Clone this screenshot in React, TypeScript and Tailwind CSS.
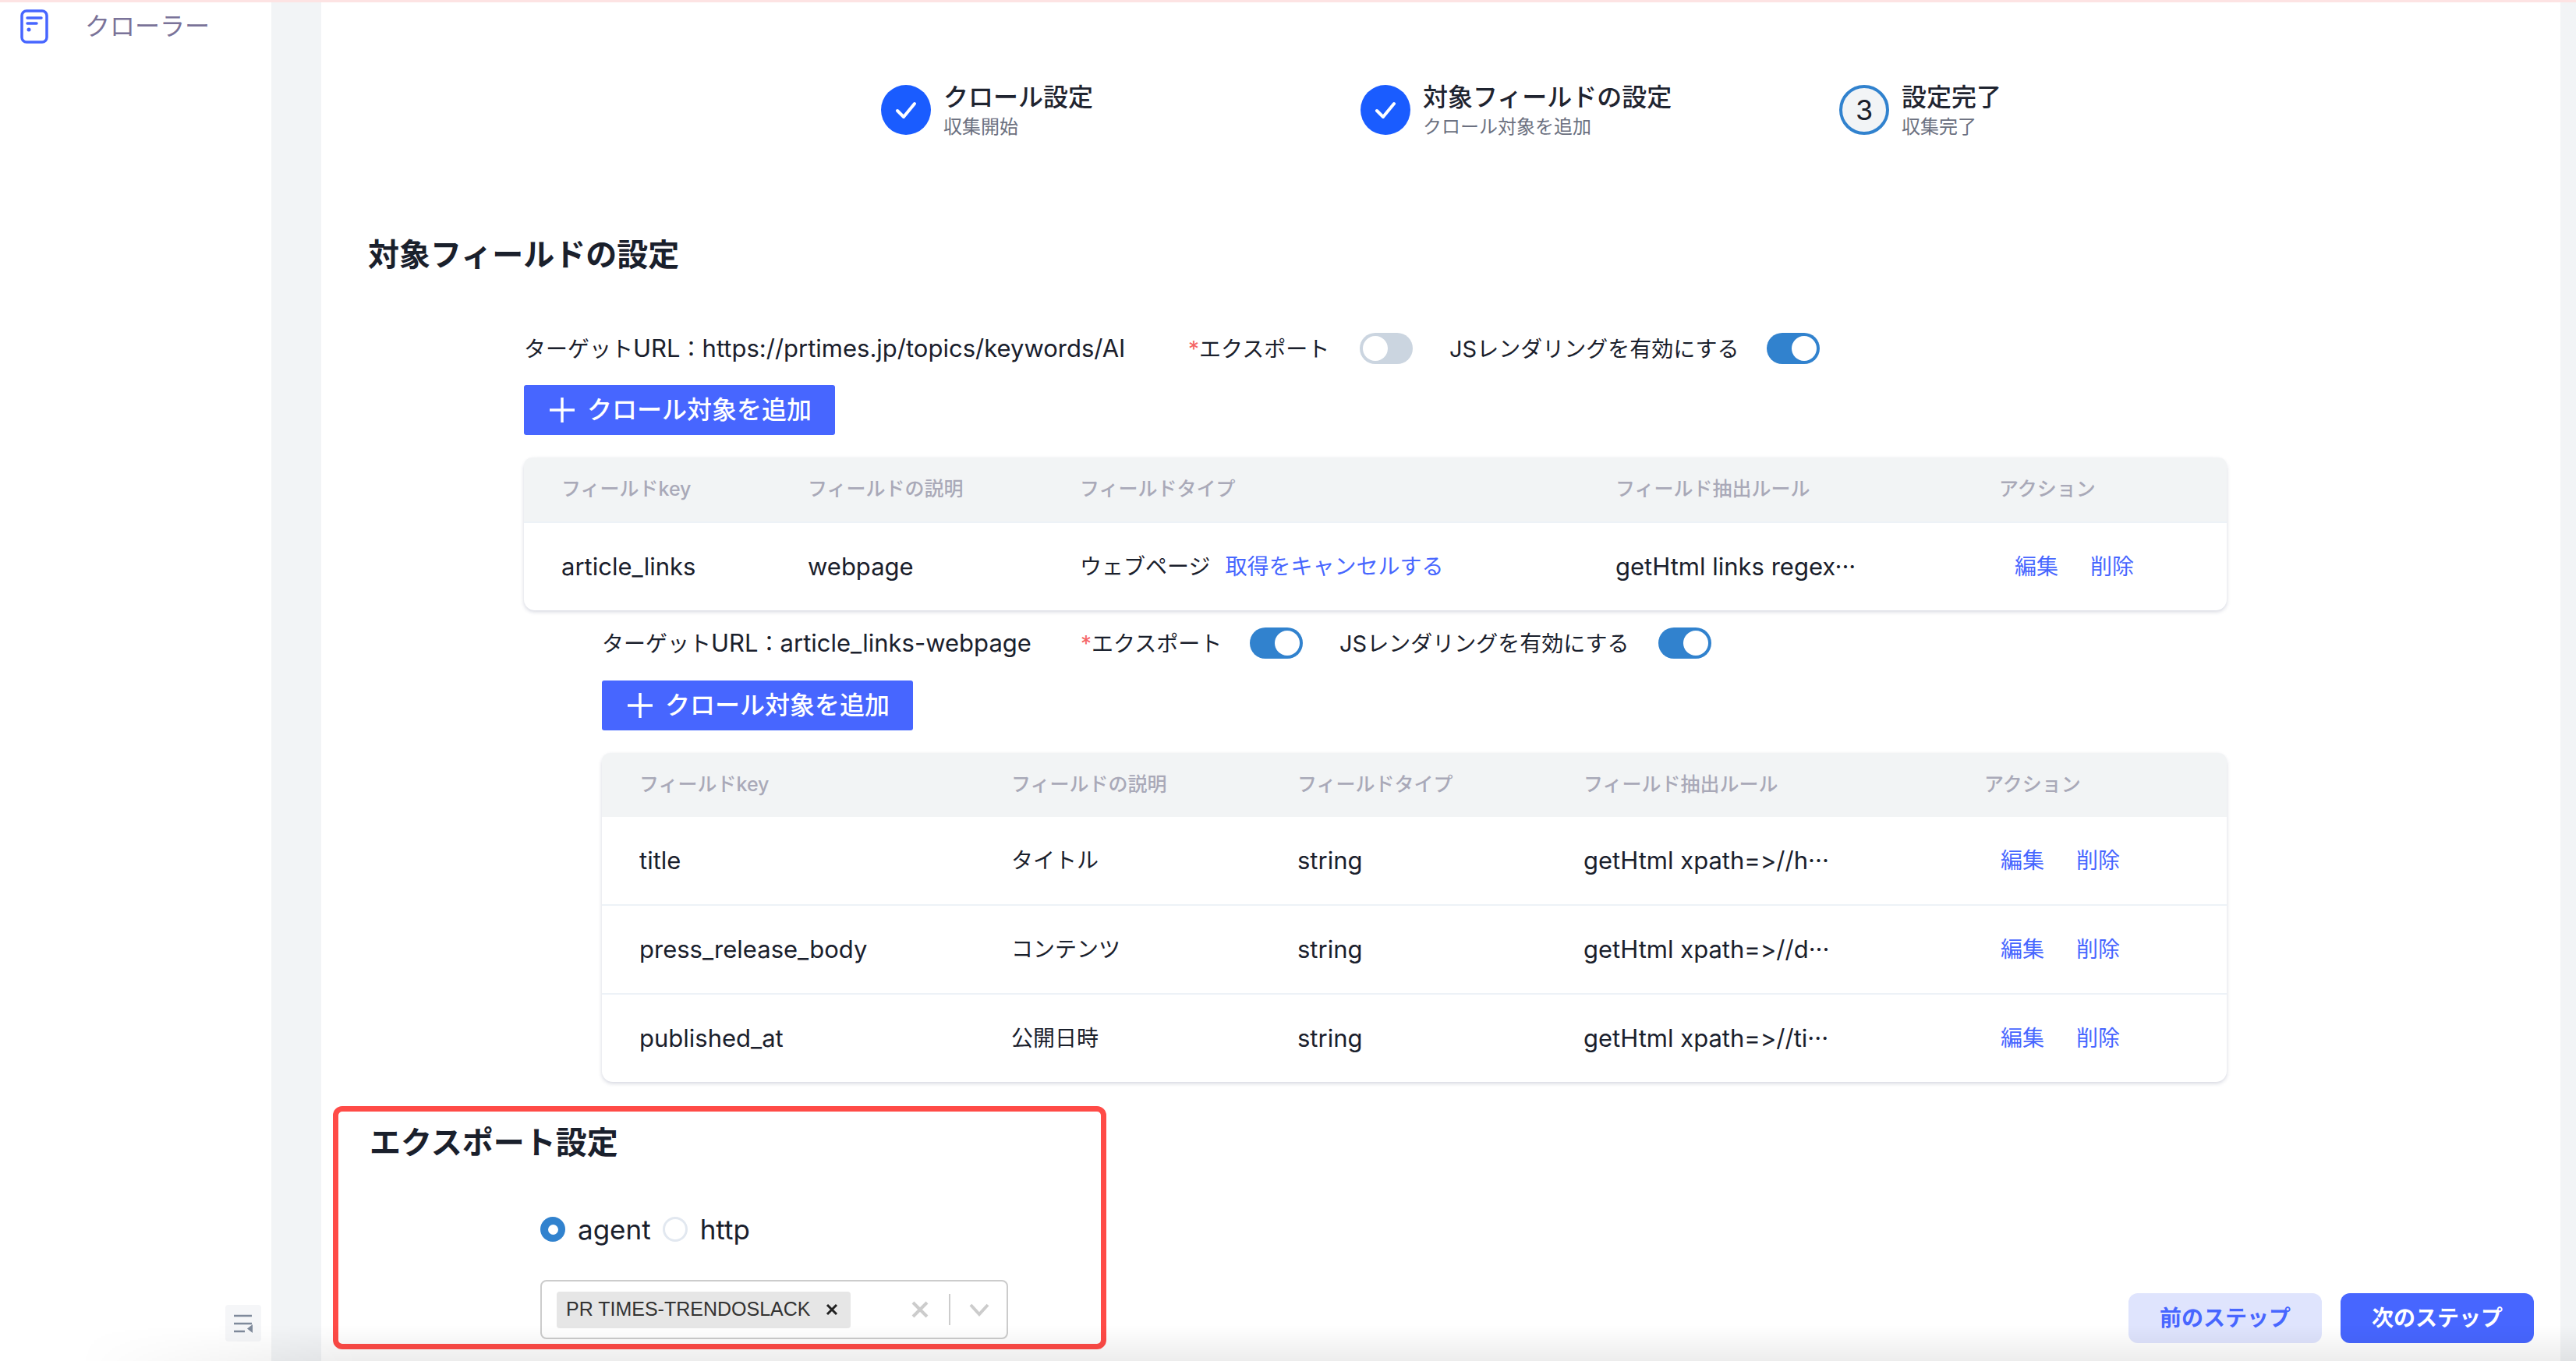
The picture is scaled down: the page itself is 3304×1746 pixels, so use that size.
import React from "react";

function Toggle({ on }: { on: boolean }) {
  return (
    <div className={`flex h-[40px] w-[68px] shrink-0 items-center rounded-full p-[4px] ${on ? "justify-end bg-[#3182ce]" : "justify-start bg-[#cbd5e0]"}`}>
      <div className="h-[32px] w-[32px] rounded-full bg-white" />
    </div>
  );
}

function AddButton() {
  return (
    <button className="flex h-[64px] w-[399px] items-center rounded-[3px] bg-[#4766ff] pl-[32px] text-[32px] font-medium text-white">
      <svg width="34" height="34" viewBox="0 0 34 34" className="mr-[15px] shrink-0">
        <path d="M17 1v32M1 17h32" stroke="#fff" strokeWidth="3.5" fill="none" />
      </svg>
      クロール対象を追加
    </button>
  );
}

function J({ children, className = "" }: { children: React.ReactNode; className?: string }) {
  return <span className={`text-[28px] ${className}`}>{children}</span>;
}

function ConfigRow({ url, urlW, expW, jsW, exportOn }: { url: string; urlW: string; expW: string; jsW: string; exportOn: boolean }) {
  return (
    <div className="flex h-[40px] items-center text-[31px] leading-[40px] text-[#1a202c]">
      <span className={`whitespace-nowrap ${urlW}`}>
        <J>ターゲット</J>URL<J>：</J>{url}
      </span>
      <span className={`whitespace-nowrap ${expW}`}>
        <J className="text-[#f56565]">*</J><J>エクスポート</J>
      </span>
      <Toggle on={exportOn} />
      <span className={`ml-[47px] whitespace-nowrap ${jsW}`}>
        <span className="text-[29px]">JS</span><J>レンダリングを有効にする</J>
      </span>
      <Toggle on />
    </div>
  );
}

function Actions({ className }: { className: string }) {
  return (
    <div className={`flex gap-[41px] text-[28px] text-[#4766ff] ${className}`}>
      <span>編集</span>
      <span>削除</span>
    </div>
  );
}

function Cell({ children, cjk }: { children: React.ReactNode; cjk?: boolean }) {
  return <div className={`truncate whitespace-nowrap pr-[8px] ${cjk ? "text-[28px]" : ""}`}>{children}</div>;
}

function TableHeader({ cols, labels }: { cols: string; labels: string[] }) {
  return (
    <div className={`grid h-[82px] items-center rounded-t-[10px] bg-[#f2f4f5] text-[25px] font-medium text-[#a9a9b8] ${cols}`}>
      {labels.map((l) => (
        <div key={l} className="whitespace-nowrap">{l}</div>
      ))}
    </div>
  );
}

const labels = ["フィールドkey", "フィールドの説明", "フィールドタイプ", "フィールド抽出ルール", "アクション"];
const bodyText = "text-[31px] text-[#1a202c] leading-[40px] [font-feature-settings:'calt'_0,'liga'_0]";

function FirstTable() {
  const cols = "grid-cols-[316px_349px_687px_492px_1fr] pl-[48px]";
  return (
    <div className="rounded-[14px] bg-white shadow-[0_2px_5px_rgba(60,70,110,0.22)]">
      <TableHeader cols={cols} labels={labels} />
      <div className={`grid h-[114px] items-center border-t-2 border-[#edf2f7] ${bodyText} ${cols}`}>
        <Cell>article_links</Cell>
        <Cell>webpage</Cell>
        <div className="whitespace-nowrap text-[28px]">
          ウェブページ<span className="ml-[19px] text-[#4766ff]">取得をキャンセルする</span>
        </div>
        <Cell>getHtml links regex···</Cell>
        <Actions className="pl-[20px]" />
      </div>
    </div>
  );
}

function SecondTable() {
  const cols = "grid-cols-[477px_367px_367px_514px_1fr] pl-[48px]";
  const rows: [string, string, string, string, string][] = [
    ["title", "タイトル", "string", "getHtml xpath=>//h···", "h-[112px]"],
    ["press_release_body", "コンテンツ", "string", "getHtml xpath=>//d···", "h-[114px] border-t-2 border-[#edf2f7]"],
    ["published_at", "公開日時", "string", "getHtml xpath=>//ti···", "h-[114px] border-t-2 border-[#edf2f7]"],
  ];
  return (
    <div className="rounded-[14px] bg-white shadow-[0_2px_5px_rgba(60,70,110,0.22)]">
      <TableHeader cols={cols} labels={labels} />
      {rows.map((r) => (
        <div key={r[0]} className={`grid items-center ${bodyText} ${r[4]} ${cols}`}>
          <Cell>{r[0]}</Cell>
          <Cell cjk>{r[1]}</Cell>
          <Cell>{r[2]}</Cell>
          <Cell>{r[3]}</Cell>
          <Actions className="pl-[21px]" />
        </div>
      ))}
    </div>
  );
}

function StepText({ title, sub }: { title: string; sub: string }) {
  return (
    <div className="flex flex-col">
      <div className="h-[42px] whitespace-nowrap text-[32px] font-medium leading-[42px] text-[#1f2430]">{title}</div>
      <div className="mt-[2px] whitespace-nowrap text-[24px] leading-[30px] text-[#6b7080]">{sub}</div>
    </div>
  );
}

function StepDone({ title, sub }: { title: string; sub: string }) {
  return (
    <div className="flex items-center gap-[16px]">
      <div className="flex h-[64px] w-[64px] items-center justify-center rounded-full bg-[#1a5cff]">
        <svg width="36" height="36" viewBox="0 0 36 36">
          <path d="M7 19l8 8 14-17" stroke="#fff" strokeWidth="4" fill="none" strokeLinecap="round" strokeLinejoin="round" />
        </svg>
      </div>
      <StepText title={title} sub={sub} />
    </div>
  );
}

export default function App() {
  return (
    <div className="relative flex h-[1746px] w-[3304px] flex-col overflow-hidden bg-white font-['Inter','Noto_Sans_CJK_JP',sans-serif]">
      <div className="h-[3px] shrink-0 bg-[#fde3e3]" />
      <div className="flex min-h-0 flex-1">
        {/* Sidebar */}
        <aside className="relative w-[348px] shrink-0 bg-white">
          <div className="flex items-center pl-[26px] pt-[9px]">
            <svg width="36" height="44" viewBox="0 0 36 44" className="shrink-0">
              <rect x="2" y="2" width="32" height="40" rx="6" fill="none" stroke="#4766ff" strokeWidth="3.5" />
              <path d="M9 11h18M9 18h12" stroke="#4766ff" strokeWidth="3.5" strokeLinecap="round" fill="none" />
              <circle cx="11" cy="26" r="2.5" fill="#4766ff" />
            </svg>
            <span className="ml-[47px] whitespace-nowrap text-[32px] leading-[40px] text-[#7a7399]">クローラー</span>
          </div>
          <div className="absolute left-[289px] top-[1671px] flex h-[47px] w-[46px] items-center justify-center rounded-[4px] bg-[#f5f6f8]">
            <svg width="28" height="26" viewBox="0 0 28 26">
              <path d="M2 3h23M2 13h23M2 23h14" stroke="#7f8a9b" strokeWidth="2.6" fill="none" />
              <path d="M26 17v11l-7-5.500z" fill="#7f8a9b" transform="translate(0 -3)" />
            </svg>
          </div>
        </aside>
        <div className="w-[64px] shrink-0 bg-[#f2f4f6]" />

        {/* Main */}
        <main className="relative min-w-0 flex-1 bg-white pl-[60px]">
          <div className="grid grid-cols-[615px_614px_1fr] pl-[658px] pt-[101px]">
            <StepDone title="クロール設定" sub="収集開始" />
            <StepDone title="対象フィールドの設定" sub="クロール対象を追加" />
            <div className="flex items-center gap-[16px]">
              <div className="flex h-[64px] w-[64px] items-center justify-center rounded-full border-[4px] border-[#3182ce] bg-[#f2f4f6] text-[36px] text-[#1a202c]">3</div>
              <StepText title="設定完了" sub="収集完了" />
            </div>
          </div>

          <h2 className="mt-[123px] h-[52px] text-[40px] font-semibold leading-[52px] text-[#1a202c]">対象フィールドの設定</h2>

          <div className="ml-[200px] mr-[428px] mt-[74px] flex flex-col">
            <ConfigRow url="https://prtimes.jp/topics/keywords/AI" urlW="w-[852px]" expW="w-[220px]" jsW="w-[407px]" exportOn={false} />
            <div className="mt-[27px]"><AddButton /></div>
            <div className="mt-[29px]"><FirstTable /></div>

            <div className="ml-[100px] mt-[22px] flex flex-col">
              <ConfigRow url="article_links-webpage" urlW="w-[614px]" expW="w-[217px]" jsW="w-[409px]" exportOn />
              <div className="mt-[28px]"><AddButton /></div>
              <div className="mt-[29px]"><SecondTable /></div>
            </div>
          </div>

          <section className="-ml-[45px] mt-[31px] h-[312px] w-[992px] rounded-[12px] border-[7px] border-[#ff4b47] pl-[40px]">
            <h2 className="mt-[14px] h-[52px] text-[40px] font-semibold leading-[52px] text-[#1a202c]">エクスポート設定</h2>
            <div className="ml-[219px] mt-[69px] flex h-[32px] items-center text-[35px] text-[#1a202c]">
              <div className="flex h-[32px] w-[32px] items-center justify-center rounded-full bg-[#3182ce]">
                <div className="h-[13px] w-[13px] rounded-full bg-white" />
              </div>
              <span className="ml-[16px]">agent</span>
              <div className="ml-[15px] h-[32px] w-[32px] rounded-full border-[3px] border-[#e2e8f0]" />
              <span className="ml-[16px]">http</span>
            </div>
            <div className="ml-[219px] mt-[49px] flex h-[76px] w-[600px] items-center rounded-[8px] border-2 border-[#cccccc] pl-[19px]">
              <div className="flex h-[47px] w-[377px] items-center rounded-[4px] bg-[#e6e6e6] pl-[12px] font-['Liberation_Sans',sans-serif] text-[25px] text-[#333333]">
                <span className="whitespace-nowrap">PR TIMES-TRENDOSLACK</span>
                <svg width="16" height="16" viewBox="0 0 16 16" className="ml-[20px]">
                  <path d="M2 2l12 12M14 2L2 14" stroke="#222" strokeWidth="3" fill="none" />
                </svg>
              </div>
              <svg width="24" height="24" viewBox="0 0 24 24" className="ml-[77px]">
                <path d="M3 3l18 18M21 3L3 21" stroke="#cccccc" strokeWidth="4" fill="none" />
              </svg>
              <div className="ml-[25px] h-[40px] w-[2px] bg-[#cccccc]" />
              <svg width="28" height="20" viewBox="0 0 28 20" className="ml-[23px]">
                <path d="M3 4l11 12L25 4" stroke="#cccccc" strokeWidth="4" fill="none" />
              </svg>
            </div>
          </section>

          <div className="absolute right-[34px] top-[1656px] flex gap-[24px] text-[28px] font-semibold">
            <button className="h-[64px] w-[248px] rounded-[12px] bg-[#dfe4fd] text-[#4766ff]">前のステップ</button>
            <button className="h-[64px] w-[248px] rounded-[12px] bg-[#4766ff] text-white">次のステップ</button>
          </div>
        </main>
        <div className="w-[20px] shrink-0 bg-[#f2f4f6]" />
      </div>

      {/* soft fade along the bottom edge of the capture */}
      <div className="pointer-events-none absolute bottom-0 left-0 h-[46px] w-full bg-[linear-gradient(to_top,#00000012,transparent)] [mask-image:linear-gradient(to_right,transparent_3%,black_14%)]" />
    </div>
  );
}
